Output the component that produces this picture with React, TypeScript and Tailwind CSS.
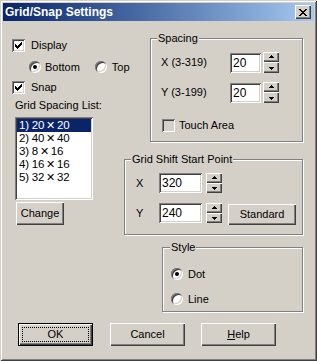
import React from "react";

const raised =
  "shadow-[inset_1px_1px_0_#fff,inset_-1px_-1px_0_#404040,inset_-2px_-2px_0_#808080]";
const sunken =
  "shadow-[inset_1px_1px_0_#808080,inset_-1px_-1px_0_#fff,inset_2px_2px_0_#404040,inset_-2px_-2px_0_#d4d0c8]";

function Check({ checked, disabled }: { checked?: boolean; disabled?: boolean }) {
  return (
    <div
      className={`w-[13px] h-[13px] shrink-0 ${sunken} ${disabled ? "bg-[#d4d0c8]" : "bg-white"}`}
    >
      {checked && (
        <svg width="13" height="13" viewBox="0 0 13 13" shapeRendering="crispEdges">
          <g fill="#000">
            <rect x="9" y="3" width="1" height="1" />
            <rect x="8" y="4" width="2" height="1" />
            <rect x="3" y="5" width="1" height="1" />
            <rect x="7" y="5" width="3" height="1" />
            <rect x="3" y="6" width="2" height="1" />
            <rect x="6" y="6" width="3" height="1" />
            <rect x="3" y="7" width="5" height="1" />
            <rect x="4" y="8" width="3" height="1" />
            <rect x="5" y="9" width="1" height="1" />
          </g>
        </svg>
      )}
    </div>
  );
}

function Radio({ checked }: { checked?: boolean }) {
  return (
    <div
      className={`w-[12px] h-[12px] shrink-0 rounded-full bg-white flex items-center justify-center shadow-[inset_1px_1px_0_#808080,inset_-1px_-1px_0_#fff,inset_2px_2px_0_#404040,inset_-2px_-2px_0_#d4d0c8]`}
    >
      {checked && <div className="w-[4px] h-[4px] rounded-full bg-black" />}
    </div>
  );
}

function Arrow({ up }: { up?: boolean }) {
  return (
    <svg width="7" height="4" viewBox="0 0 7 4" shapeRendering="crispEdges">
      {up ? (
        <g fill="#000">
          <rect x="3" y="0" width="1" height="1" />
          <rect x="2" y="1" width="3" height="1" />
          <rect x="1" y="2" width="5" height="1" />
        </g>
      ) : (
        <g fill="#000">
          <rect x="1" y="1" width="5" height="1" />
          <rect x="2" y="2" width="3" height="1" />
          <rect x="3" y="3" width="1" height="1" />
        </g>
      )}
    </svg>
  );
}

function Spin({ tall }: { tall?: boolean }) {
  return (
    <div className="flex flex-col w-[16px] shrink-0">
      <div className={`h-[10px] bg-[#d4d0c8] ${raised} flex items-center justify-center`}>
        <Arrow up />
      </div>
      <div
        className={`${tall ? "h-[11px]" : "h-[10px]"} bg-[#d4d0c8] ${raised} flex items-center justify-center`}
      >
        <Arrow />
      </div>
    </div>
  );
}

function Input({ value, w }: { value: string; w: string }) {
  return (
    <div className={`${w} h-[20px] bg-white ${sunken} pl-[3px] flex items-center text-[12px]`}>
      {value}
    </div>
  );
}

function Group({
  label,
  className,
  labelClass,
  children,
}: {
  label: string;
  className: string;
  labelClass: string;
  children?: React.ReactNode;
}) {
  return (
    <div
      className={`relative border border-[#808080] shadow-[inset_1px_1px_0_#fff,1px_1px_0_#fff] ${className}`}
    >
      <span
        className={`absolute top-[-7px] ${labelClass} bg-[#d4d0c8] px-[1px] leading-[13px] whitespace-nowrap`}
      >
        {label}
      </span>
      {children}
    </div>
  );
}

function Button({
  children,
  className,
  isDefault,
}: {
  children: React.ReactNode;
  className: string;
  isDefault?: boolean;
}) {
  if (isDefault) {
    return (
      <div className={`${className} border border-black bg-[#d4d0c8] ${raised} p-[3px]`}>
        <div className="w-full h-full border border-dotted border-black flex items-center justify-center">
          {children}
        </div>
      </div>
    );
  }
  return (
    <div className={`${className} bg-[#d4d0c8] ${raised} flex items-center justify-center`}>
      {children}
    </div>
  );
}

const items = ["1) 20", "2) 40", "3) 8", "4) 16", "5) 32"];
const items2 = ["20", "40", "16", "16", "32"];

export default function App() {
  return (
    <div className="w-[317px] h-[361px] bg-[#d4d0c8] p-[3px] text-black text-[11px] font-['Liberation_Sans',Arial,sans-serif] shadow-[inset_1px_1px_0_#d4d0c8,inset_-1px_-1px_0_#404040,inset_2px_2px_0_#fff,inset_-2px_-2px_0_#808080] overflow-hidden">
      {/* Title bar */}
      <div className="h-[18px] bg-linear-to-r from-[#0a246a] to-[#a6caf0] flex items-center pl-[2px] pr-[3px]">
        <span className="text-white font-bold text-[12px] leading-[18px] flex-1">
          Grid/Snap Settings
        </span>
        <div className={`w-[16px] h-[14px] bg-[#d4d0c8] ${raised} flex items-center justify-center`}>
          <svg width="8" height="7" viewBox="0 0 8 7" shapeRendering="crispEdges">
            <g fill="#000">
              <rect x="0" y="0" width="2" height="1" />
              <rect x="6" y="0" width="2" height="1" />
              <rect x="1" y="1" width="2" height="1" />
              <rect x="5" y="1" width="2" height="1" />
              <rect x="2" y="2" width="4" height="1" />
              <rect x="3" y="3" width="2" height="1" />
              <rect x="2" y="4" width="4" height="1" />
              <rect x="1" y="5" width="2" height="1" />
              <rect x="5" y="5" width="2" height="1" />
              <rect x="0" y="6" width="2" height="1" />
              <rect x="6" y="6" width="2" height="1" />
            </g>
          </svg>
        </div>
      </div>

      {/* Main */}
      <div className="flex">
        {/* Left column */}
        <div className="ml-[9px] w-[112px] flex flex-col">
          <div className="mt-[18px] flex items-center h-[13px]">
            <Check checked />
            <span className="ml-[6px]">Display</span>
          </div>
          <div className="mt-[9px] flex items-center h-[12px] pl-[17px]">
            <Radio checked />
            <span className="ml-[4px]">Bottom</span>
            <div className="ml-[15px]">
              <Radio />
            </div>
            <span className="ml-[5px]">Top</span>
          </div>
          <div className="mt-[8px] flex items-center h-[13px]">
            <Check checked />
            <span className="ml-[6px]">Snap</span>
          </div>
          <div className="mt-[5px] pl-[3px] leading-[13px] h-[13px]">Grid Spacing List:</div>
          <div className={`mt-[5px] ml-[3px] w-[78px] h-[83px] bg-white ${sunken} p-[2px]`}>
            {items.map((it, i) => (
              <div
                key={i}
                className={`h-[13px] leading-[13px] pl-[2px] text-[11.5px] tracking-[-0.2px] whitespace-nowrap ${
                  i === 0 ? "bg-[#0a246a] text-white" : ""
                }`}
              >
                {it}
                <span className="inline-block mx-[2px] font-['DejaVu_Sans',sans-serif] text-[11px] font-extralight">
                  ✕
                </span>
                {items2[i]}
              </div>
            ))}
          </div>
          <Button className="mt-[2px] ml-[4px] w-[48px] h-[23px]">Change</Button>
        </div>

        {/* Right column */}
        <div className="w-[179px] flex flex-col">
          <Group label="Spacing" className="mt-[17px] ml-[26px] w-[153px] h-[104px]" labelClass="left-[6px]">
            <div className="pl-[10px] pt-[13px] flex flex-col">
              <div className="flex items-center h-[21px]">
                <span className="w-[69px]">X (3-319)</span>
                <div className="mt-[1px]">
                  <Input value="20" w="w-[31px]" />
                </div>
                <div className="ml-[2px]">
                  <Spin tall />
                </div>
              </div>
              <div className="mt-[9px] flex items-center h-[21px]">
                <span className="w-[69px]">Y (3-199)</span>
                <div className="mt-[1px]">
                  <Input value="20" w="w-[31px]" />
                </div>
                <div className="ml-[2px]">
                  <Spin tall />
                </div>
              </div>
              <div className="mt-[16px] ml-[1px] flex items-center h-[13px]">
                <Check disabled />
                <span className="ml-[4px]">Touch Area</span>
              </div>
            </div>
          </Group>

          <Group label="Grid Shift Start Point" className="mt-[17px] w-[179px] h-[76px]" labelClass="left-[6px]">
            <div className="pl-[11px] pt-[13px] flex flex-col">
              <div className="flex items-center h-[20px]">
                <span className="w-[23px]">X</span>
                <Input value="320" w="w-[43px]" />
                <div className="ml-[4px]">
                  <Spin />
                </div>
              </div>
              <div className="mt-[10px] flex items-start h-[22px]">
                <span className="w-[23px] leading-[20px]">Y</span>
                <Input value="240" w="w-[43px]" />
                <div className="ml-[4px]">
                  <Spin />
                </div>
                <Button className="ml-[6px] mt-[1px] w-[68px] h-[21px]">Standard</Button>
              </div>
            </div>
          </Group>

          <Group label="Style" className="mt-[12px] ml-[38px] w-[141px] h-[65px]" labelClass="left-[7px]">
            <div className="pl-[8px] pt-[20px] flex flex-col">
              <div className="flex items-center h-[12px]">
                <Radio checked />
                <span className="ml-[5px]">Dot</span>
              </div>
              <div className="mt-[13px] flex items-center h-[12px]">
                <Radio />
                <span className="ml-[5px]">Line</span>
              </div>
            </div>
          </Group>
        </div>
      </div>

      {/* Buttons */}
      <div className="mt-[11px] pl-[15px] flex">
        <Button isDefault className="w-[75px] h-[23px]">
          OK
        </Button>
        <Button className="ml-[17px] w-[75px] h-[23px]">Cancel</Button>
        <Button className="ml-[16px] w-[75px] h-[23px]">
          <span>
            <span className="underline">H</span>elp
          </span>
        </Button>
      </div>
    </div>
  );
}
